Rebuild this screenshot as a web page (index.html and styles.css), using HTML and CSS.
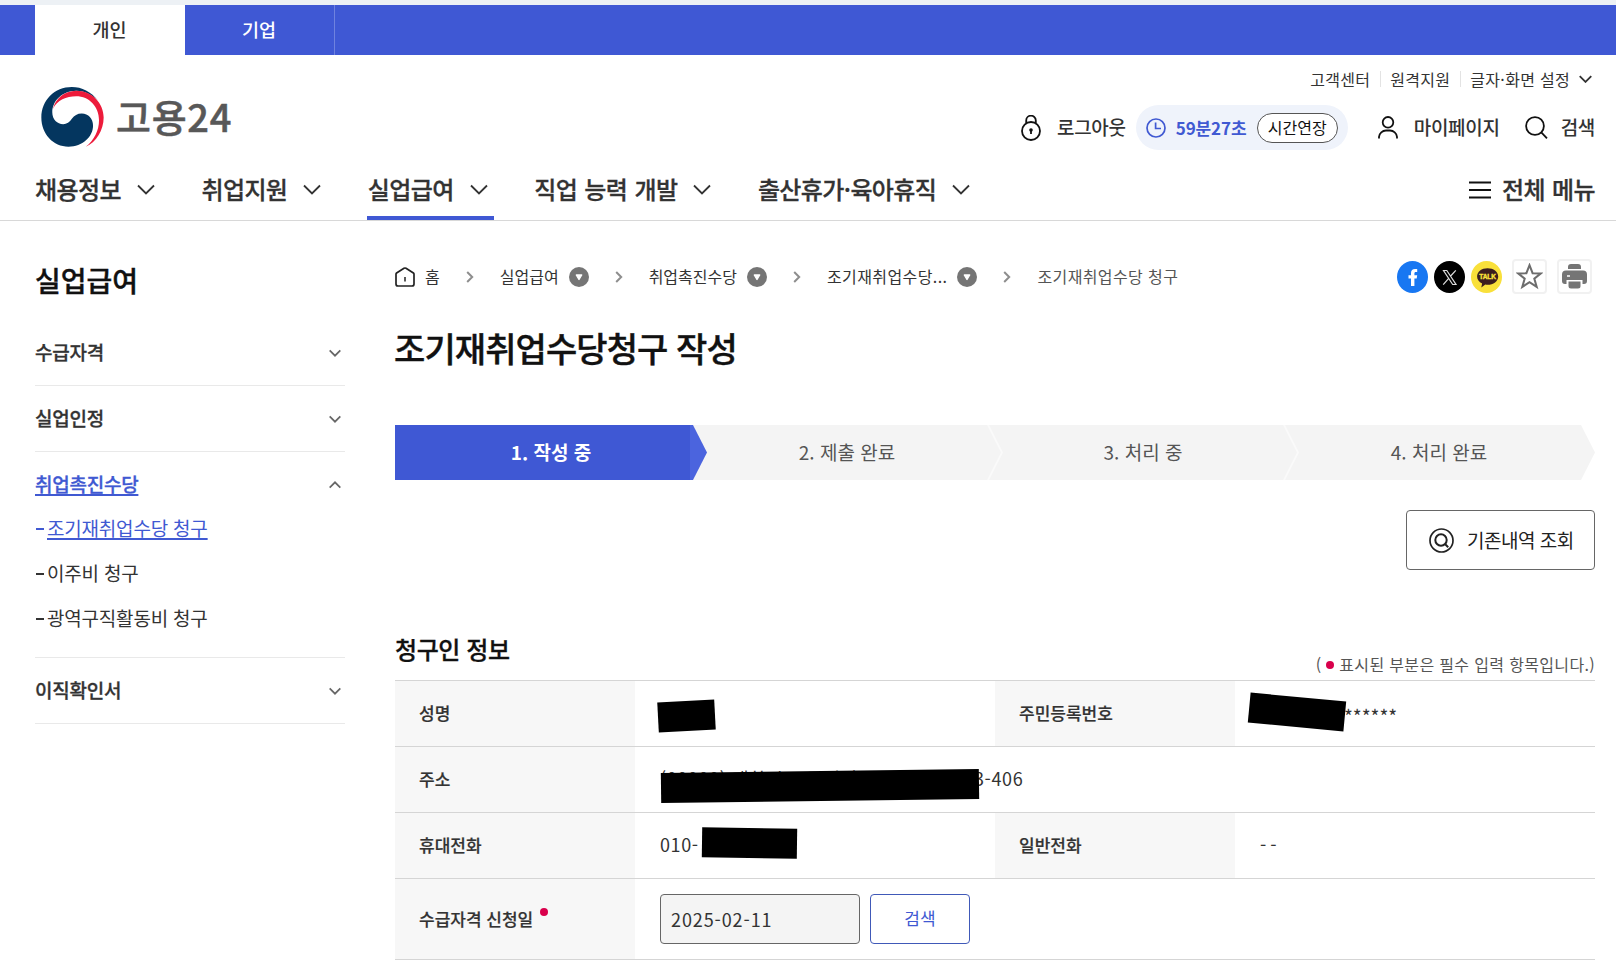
FILE: index.html
```
<!DOCTYPE html>
<html lang="ko">
<head>
<meta charset="UTF-8">
<title>조기재취업수당청구 작성 | 고용24</title>
<link rel="stylesheet" href="styles.css">
</head>
<body>
<svg class="defs" width="0" height="0">
    <symbol id="chevron" viewBox="0 0 18 11"><path d="M1 1.5l8 8 8-8" fill="none" stroke="currentColor"/></symbol>
    <symbol id="arrow" viewBox="0 0 8 12"><path d="M1.2 1l5 5-5 5" fill="none" stroke="#8e8e8e" stroke-width="2"/></symbol>
    <symbol id="more" viewBox="0 0 20 20"><circle cx="10" cy="10" r="10" fill="#757575"/><path d="M7.3 8h5.4L10 12.500z" fill="#fff" stroke="#fff" stroke-width="1.400" stroke-linejoin="round"/></symbol>
</svg>

<div class="topbar">
    <a class="tab on">개인</a>
    <a class="tab">기업</a>
</div>

<header class="header">
    <div class="head-row">
        <div class="logo">
            <svg width="63" height="60" viewBox="0 0 188 181">
                <path d="M172 42C150 14 122 0 92 0 40 0 0 40 0 92c0 50 36 88 82 88 42 0 74-30 74-64 0-20-14-36-34-36-14 0-22 6-30 16-6 10-16 16-26 16-18 0-33-14-33-36 0-36 31-64 72-65 27 0 50 13 67 31z" fill="#04365f"/>
                <path d="M35 66C42 34 70 12 105 11c50 0 83 39 83 81 0 38-23 76-54 88 26-20 40-50 40-80 0-40-29-72-69-72-30 0-57 12-70 38z" fill="#ed1b3b"/>
            </svg>
            <span class="logo-text">고용24</span>
        </div>
        <div class="head-right">
            <div class="util">
                <a>고객센터</a>
                <a>원격지원</a>
                <a>글자·화면 설정<svg class="util-arrow" width="13" height="8"><use href="#chevron"/></svg></a>
            </div>
            <div class="member">
                <a class="logout">
                    <svg width="22" height="26" viewBox="0 0 22 26" fill="none" stroke="#111" stroke-width="1.8"><circle cx="11" cy="16" r="9"/><path d="M6.2 8V5.5a4.8 4.8 0 0 1 9.6 0V8"/><circle cx="11" cy="15" r="1.8" fill="#111" stroke="none"/><path d="M11 15v4"/></svg>
                    로그아웃
                </a>
                <div class="timer">
                    <svg width="20" height="20" viewBox="0 0 20 20" fill="none" stroke="#4059d2" stroke-width="1.7"><circle cx="10" cy="10" r="9"/><path d="M9.6 4.5v6h5.4"/></svg>
                    <b>59분27초</b>
                    <button>시간연장</button>
                </div>
                <a class="mypage">
                    <svg width="20" height="23" viewBox="0 0 20 23" fill="none" stroke="#111" stroke-width="1.8"><circle cx="10" cy="6.3" r="5.3"/><path d="M1 22.5v-1.7a7 7 0 0 1 7-6.3h4a7 7 0 0 1 7 6.3v1.7"/></svg>
                    마이페이지
                </a>
                <a class="find">
                    <svg width="23" height="23" viewBox="0 0 23 23" fill="none" stroke="#111" stroke-width="1.8"><circle cx="10" cy="10" r="8.9"/><path d="M16.3 16.3l5.7 6"/></svg>
                    검색
                </a>
            </div>
        </div>
    </div>
    <nav class="gnb">
        <a>채용정보<svg width="18" height="11"><use href="#chevron"/></svg></a>
        <a>취업지원<svg width="18" height="11"><use href="#chevron"/></svg></a>
        <a class="on">실업급여<svg width="18" height="11"><use href="#chevron"/></svg></a>
        <a>직업 능력 개발<svg width="18" height="11"><use href="#chevron"/></svg></a>
        <a>출산휴가·육아휴직<svg width="18" height="11"><use href="#chevron"/></svg></a>
        <a class="all"><svg width="22" height="18" viewBox="0 0 22 18" stroke="#111" stroke-width="2.4"><path d="M0 1.5h22M0 9h22M0 16.5h22"/></svg>전체 메뉴</a>
    </nav>
</header>

<div class="wrap">
    <aside class="lnb">
        <h2>실업급여</h2>
        <ul class="menu">
            <li><a class="dep1">수급자격<svg width="12" height="8"><use href="#chevron"/></svg></a></li>
            <li><a class="dep1">실업인정<svg width="12" height="8"><use href="#chevron"/></svg></a></li>
            <li class="open">
                <a class="dep1"><span>취업촉진수당</span><svg width="12" height="8"><use href="#chevron"/></svg></a>
                <ul class="sub">
                    <li class="on"><a>조기재취업수당 청구</a></li>
                    <li><a>이주비 청구</a></li>
                    <li><a>광역구직활동비 청구</a></li>
                </ul>
            </li>
            <li><a class="dep1">이직확인서<svg width="12" height="8"><use href="#chevron"/></svg></a></li>
        </ul>
    </aside>

    <main class="content">
        <div class="path">
            <div class="crumb">
                <svg class="home" width="20" height="20" viewBox="0 0 20 20" fill="none" stroke="#222" stroke-width="1.7"><path d="M1 7.2Q1 6.5 1.6 6L9 1.3q1-.6 2 0L18.4 6q.6.5.6 1.2V17q0 2-2 2H3q-2 0-2-2z"/><path d="M10 10v4.5" stroke-width="1.5"/></svg>
                <a class="c1">홈</a>
                <svg class="arrow" width="8" height="12"><use href="#arrow"/></svg>
                <a>실업급여</a><svg width="20" height="20"><use href="#more"/></svg>
                <svg class="arrow" width="8" height="12"><use href="#arrow"/></svg>
                <a>취업촉진수당</a><svg width="20" height="20"><use href="#more"/></svg>
                <svg class="arrow" width="8" height="12"><use href="#arrow"/></svg>
                <a class="cut">조기재취업수당...</a><svg width="20" height="20"><use href="#more"/></svg>
                <svg class="arrow" width="8" height="12"><use href="#arrow"/></svg>
                <a class="last">조기재취업수당 청구</a>
            </div>
            <div class="sns">
                <svg width="31" height="32" viewBox="0 0 31 32"><ellipse cx="15.5" cy="16" rx="15.5" ry="16" fill="#1877f2"/><path d="M14 25V17.500H11.500V14.200H14V12C14 9.500 15.500 8 18 8H20.200V11H18.800C17.700 11 17.400 11.600 17.400 12.500V14.200H20.200L19.700 17.500H17.400V25z" fill="#fff"/></svg>
                <svg width="31" height="32" viewBox="0 0 31 32"><ellipse cx="15.5" cy="16" rx="15.5" ry="16"/><path d="M9.500 9.500h3.300l9.200 14h-3.300zM21.800 9.300l-5.600 6.200M14.700 17.300l-5.500 6.300" fill="none" stroke="#ddd" stroke-width="1.200"/></svg>
                <svg width="31" height="32" viewBox="0 0 31 32"><ellipse cx="15.5" cy="16" rx="15.5" ry="16" fill="#f9e03a"/><path d="M16.500 7.200c6 0 10.700 3.500 10.700 8.300s-4.700 8.300-10.700 8.300c-.8 0-1.500 0-2.200-.2l-4 2.800.8-3.900c-3.100-1.400-5-4-5-7 0-4.800 4.600-8.300 10.400-8.300z" fill="#3b1d1e"/><text x="16.600" y="18" class="talk">TALK</text></svg>
                <span class="sq"><svg width="27" height="27" viewBox="0 0 27 27"><path d="M13.500 2.200l3.100 8 8.300.2-6.600 5.200 2.400 8.300-7.200-4.800-7.200 4.800 2.400-8.300-6.600-5.200 8.300-.2z" fill="none" stroke="#6d6d6d" stroke-width="2"/></svg></span>
                <span class="sq"><svg width="25" height="25" viewBox="0 0 25 25" fill="#757575"><path d="M6 5V3q0-3 3-3h7q3 0 3 3v2z"/><path d="M4 6.500h17q4 0 4 4V17q0 3-3 3h-1.500v-4h-16v4H3q-3 0-3-3v-6.500q0-4 4-4z"/><path d="M6.500 17.500h12V22q0 2.500-2.500 2.500H9q-2.500 0-2.500-2.500z"/><path d="M5 12h3" stroke="#fff" stroke-width="1.500"/></svg></span>
            </div>
        </div>

        <h1>조기재취업수당청구 작성</h1>

        <ol class="steps">
            <li class="now"><span>1. 작성 중</span></li>
            <li><span>2. 제출 완료</span></li>
            <li><span>3. 처리 중</span></li>
            <li><span>4. 처리 완료</span></li>
        </ol>

        <div class="btn-area">
            <button class="btn-history"><svg width="25" height="25" viewBox="0 0 25 25" fill="none" stroke="#222" stroke-width="1.7"><circle cx="12.5" cy="12.5" r="11.5"/><circle cx="12" cy="12" r="5.7" stroke-width="2"/><path d="M16 16l3.200 3.200" stroke-width="2"/></svg><span>기존내역 조회</span></button>
        </div>

        <div class="sec-head">
            <h3>청구인 정보</h3>
            <p>( <i class="dot"></i> 표시된 부분은 필수 입력 항목입니다.)</p>
        </div>
        <table class="form">
            <colgroup><col class="cth"><col class="ctd"><col class="cth"><col class="ctd"></colgroup>
            <tr>
                <th>성명</th>
                <td><div class="val"><span class="mask name"></span></div></td>
                <th>주민등록번호</th>
                <td><div class="val ssn"><span class="mask num"></span>******</div></td>
            </tr>
            <tr>
                <th>주소</th>
                <td colspan="3"><div class="val"><span class="hid">(00000) 대한시 도로명길 00<span class="mask addr"></span></span>3-406</div></td>
            </tr>
            <tr>
                <th>휴대전화</th>
                <td><div class="val">010-<span class="mask tel"></span></div></td>
                <th>일반전화</th>
                <td><div class="val dash">--</div></td>
            </tr>
            <tr class="tall">
                <th>수급자격 신청일<i class="dot"></i></th>
                <td colspan="3"><div class="inp"><input type="text" value="2025-02-11" readonly><button>검색</button></div></td>
            </tr>
        </table>
    </main>
</div>
</body>
</html>
```

FILE: styles.css
```
* {
    box-sizing: border-box;
}
body {
    margin: 0;
    background: #fff;
    color: #333;
    font-family: "Noto Sans CJK KR", "Noto Sans", sans-serif;
    font-size: 17px;
    line-height: 1.5;
    height: 961px;
    overflow: hidden;
}
ul, ol { list-style: none; margin: 0; padding: 0; }
h1, h2, h3, p { margin: 0; }
h1, h2, h3 { color: #111; font-weight: 500; }
svg { display: block; flex: none; }
button, input { font-family: inherit; }
.defs { position: absolute; }

/* top tabs */
.topbar {
    display: flex;
    height: 55px;
    border-top: 5px solid #edf1f5;
    background: #3f58d4;
    padding-left: 35px;
}
.tab {
    width: 150px;
    line-height: 48px;
    text-align: center;
    color: #fff;
    font-size: 18.5px;
    font-weight: 500;
    padding-right: 1px;
    border-right: 1px solid #6f82df;
}
.tab.on { background: #fff; color: #333; border-right: 0; }

/* header */
.header {
    height: 166px;
    border-bottom: 1px solid #d8d8d8;
    padding: 0 21px 0 34px;
}
.head-row {
    display: flex;
    justify-content: space-between;
    height: 110px;
}
.logo { display: flex; padding: 32px 0 0 7px; }
.logo-text {
    margin-left: 12px;
    font-size: 38px;
    font-weight: 500;
    line-height: 58px;
    letter-spacing: 0.7px;
    color: #585858;
    -webkit-text-stroke: 0.5px #585858;
}
.util {
    display: flex;
    justify-content: flex-end;
    padding: 11px 3px 0 0;
    height: 38px;
}
.util a {
    display: flex;
    align-items: center;
    height: 26px;
    font-size: 16px;
    letter-spacing: 0.3px;
    white-space: nowrap;
}
.util a + a { margin-left: 10px; padding-left: 10px; background: linear-gradient(#e3e3e3, #e3e3e3) 0 5px / 1px 16px no-repeat; }
.util-arrow { margin-left: 9px; stroke-width: 2.5; }
.member {
    display: flex;
    align-items: center;
    height: 69px;
    font-size: 19px;
    font-weight: 500;
}
.member a { display: flex; align-items: center; letter-spacing: -0.3px; white-space: nowrap; }
.logout svg { margin-right: 15px; }
.timer {
    display: flex;
    align-items: center;
    width: 212px;
    height: 45px;
    margin-left: 10px;
    padding: 0 10px;
    border-radius: 23px;
    background: #eff3fb;
    color: #4059d2;
    font-size: 17px;
}
.timer b { font-weight: 700; margin-left: 10px; width: 81px; white-space: nowrap; letter-spacing: -0.1px; }
.timer button {
    width: 81px;
    height: 30px;
    padding: 0 0 1px;
    border: 1px solid #555;
    border-radius: 15px;
    background: #fff;
    color: #111;
    font-size: 16px;
}
.mypage { margin-left: 30px; }
.mypage svg { margin-right: 16px; }
.find { margin-left: 25px; }
.find svg { margin-right: 13px; }

.gnb { display: flex; height: 55px; }
.gnb a {
    display: flex;
    align-items: center;
    height: 55px;
    margin-right: 39.5px;
    padding: 0 6px 7px 1px;
    font-size: 24px;
    font-weight: 500;
    letter-spacing: -0.6px;
    word-spacing: 1px;
    white-space: nowrap;
    -webkit-text-stroke: 0.3px #333;
}
.gnb a svg { margin-left: 16px; stroke-width: 1.8; }
.gnb a.on { border-bottom: 4px solid #3f58d4; padding-bottom: 3px; }
.gnb a.all { margin: 0 0 0 auto; padding-right: 0; }
.gnb a.all svg { margin: 1px 11px 0 0; }

/* body */
.wrap {
    display: flex;
    padding: 0 21px 0 35px;
    justify-content: space-between;
}
.lnb { width: 310px; padding-top: 38px; }
.lnb h2 {
    font-size: 28px;
    line-height: 42px;
    margin-bottom: 19px;
    -webkit-text-stroke: 0.4px #111;
}
.menu > li { border-bottom: 1px solid #e9e9e9; }
.dep1 {
    display: flex;
    align-items: center;
    justify-content: space-between;
    height: 65px;
    padding-right: 4px;
    padding-bottom: 1px;
    font-size: 19px;
    font-weight: 500;
    letter-spacing: -0.25px;
    -webkit-text-stroke: 0.3px currentColor;
}
.dep1 svg { color: #666; stroke-width: 2.6; margin-top: 2px; }
.open .dep1 { color: #4059d2; }
.open .dep1 span { text-decoration: underline; text-underline-offset: 2px; text-decoration-thickness: 2px; }
.open .dep1 svg { transform: rotate(180deg); }
.sub { margin-top: -11px; padding: 0 0 16px; }
.sub li {
    display: flex;
    align-items: center;
    height: 45px;
    font-size: 19px;
    letter-spacing: -0.2px;
}
.sub li::before { content: ""; width: 8px; height: 2px; background: currentColor; margin: 0 3px 0 1px; }
.sub .on { color: #4059d2; }
.sub .on a { text-decoration: underline; text-underline-offset: 2px; text-decoration-thickness: 2px; }

.content { width: 1200px; }
.path {
    display: flex;
    justify-content: space-between;
    align-items: center;
    height: 35px;
    margin-top: 38px;
    padding-right: 3px;
}
.crumb { display: flex; align-items: center; font-size: 16px; }
.crumb a { white-space: nowrap; margin-right: 10px; padding-bottom: 1px; }
.crumb .c1 { margin-left: 10px; margin-right: 0; }
.crumb .arrow { margin: 0 26px; }
.crumb .cut { letter-spacing: 0.4px; }
.crumb .last { color: #555; letter-spacing: 0.4px; }
.sns { display: flex; align-items: center; }
.sns > svg { margin-right: 6px; }
.sq {
    display: flex;
    align-items: center;
    justify-content: center;
    width: 35px;
    height: 35px;
    margin-left: 4px;
    border: 2px solid #f1f1f1;
    border-radius: 4px;
}
.sq + .sq { margin-left: 10px; }
.talk { font: 700 6.5px "Liberation Sans", sans-serif; fill: #f9e03a; stroke: #f9e03a; stroke-width: .4px; text-anchor: middle; }

h1 {
    margin: 29px 0 0 -1px;
    font-size: 34px;
    line-height: 50px;
    letter-spacing: -0.9px;
    -webkit-text-stroke: 0.4px #111;
}
.steps { display: flex; margin-top: 52px; }
.steps li {
    width: 312px;
    height: 55px;
    margin-right: -16px;
    flex: none;
    position: relative;
    background: #fafafa;
    clip-path: polygon(0 0, 298px 0, 100% 50%, 298px 100%, 0 100%);
}
.steps span {
    display: block;
    height: 55px;
    line-height: 53px;
    text-align: center;
    font-size: 19px;
    color: #555;
    background: #f4f4f4;
    clip-path: polygon(0 0, 296px 0, 310px 50%, 296px 100%, 0 100%);
}
.steps li:nth-child(1) { z-index: 4; }
.steps li:nth-child(2) { z-index: 3; }
.steps li:nth-child(3) { z-index: 2; }
.steps li:last-child { background: #f4f4f4; }
.steps .now span { background: linear-gradient(90deg, #3f58d4 295px, #4b64de 295px); color: #fff; font-weight: 700; clip-path: none; }

.btn-area { display: flex; justify-content: flex-end; margin-top: 30px; }
.btn-history {
    display: flex;
    align-items: center;
    width: 189px;
    height: 60px;
    padding: 0 0 0 22px;
    border: 1px solid #666;
    border-radius: 4px;
    background: #fff;
    color: #222;
    font-size: 19px;
    letter-spacing: -0.5px;
    white-space: nowrap;
}
.btn-history svg { margin-right: 13px; }
.btn-history span { padding-bottom: 2px; }

.sec-head {
    display: flex;
    justify-content: space-between;
    margin-top: 60px;
    height: 50px;
}
.sec-head h3 { font-size: 24px; line-height: 38px; letter-spacing: -0.4px; -webkit-text-stroke: 0.3px #111; }
.sec-head p { padding-top: 22px; font-size: 16px; letter-spacing: 0.34px; color: #555; }
.dot { display: inline-block; width: 8px; height: 8px; border-radius: 50%; background: #d9004c; }
.sec-head .dot { vertical-align: 2px; }

.form { width: 1200px; table-layout: fixed; border-collapse: collapse; border-top: 1px solid #d5d5d5; }
.cth { width: 240px; }
.ctd { width: 360px; }
.form tr { height: 66px; }
.form .tall { height: 81px; }
.form th, .form td { padding: 0 0 0 25px; border-bottom: 1px solid #d5d5d5; text-align: left; }
.form th { padding: 0 0 2px 24px; background: #f7f7f7; font-weight: 500; -webkit-text-stroke: 0.2px #333; }
.form .tall th { padding-bottom: 0; }
.form th .dot { margin-left: 7px; vertical-align: 10px; }
.val {
    display: flex;
    align-items: center;
    position: relative;
    height: 30px;
    padding-bottom: 2px;
    font-size: 18px;
    letter-spacing: 0.6px;
    white-space: pre;
}
.hid { width: 314px; height: 27px; position: relative; }
/* masks lie over the printed values */
.mask { position: absolute; height: 30px; background: #000; }
.mask.name { width: 57px; left: -2px; top: 2px; transform: rotate(-3deg); }
.mask.num { width: 96px; left: -11px; top: -2px; transform: rotate(5.4deg); }
.mask.addr { width: 318px; left: 1px; top: 6px; transform: rotate(-.75deg); }
.mask.tel { width: 95px; left: 42px; top: -3px; transform: rotate(.8deg); }
.form .ssn { padding: 5px 0 0 84px; font-size: 19px; letter-spacing: 0; }
.form .dash { letter-spacing: 4px; }
.inp { display: flex; gap: 10px; }
.inp input {
    width: 200px;
    height: 50px;
    padding: 0 10px;
    border: 1px solid #666;
    border-radius: 4px;
    background: #f4f4f4;
    color: #333;
    font-size: 18px;
    letter-spacing: 0.9px;
}
.inp button {
    width: 100px;
    height: 50px;
    padding-bottom: 4px;
    border: 1px solid #4059b8;
    border-radius: 4px;
    background: #fff;
    color: #4059d2;
    font-size: 17px;
}
```
